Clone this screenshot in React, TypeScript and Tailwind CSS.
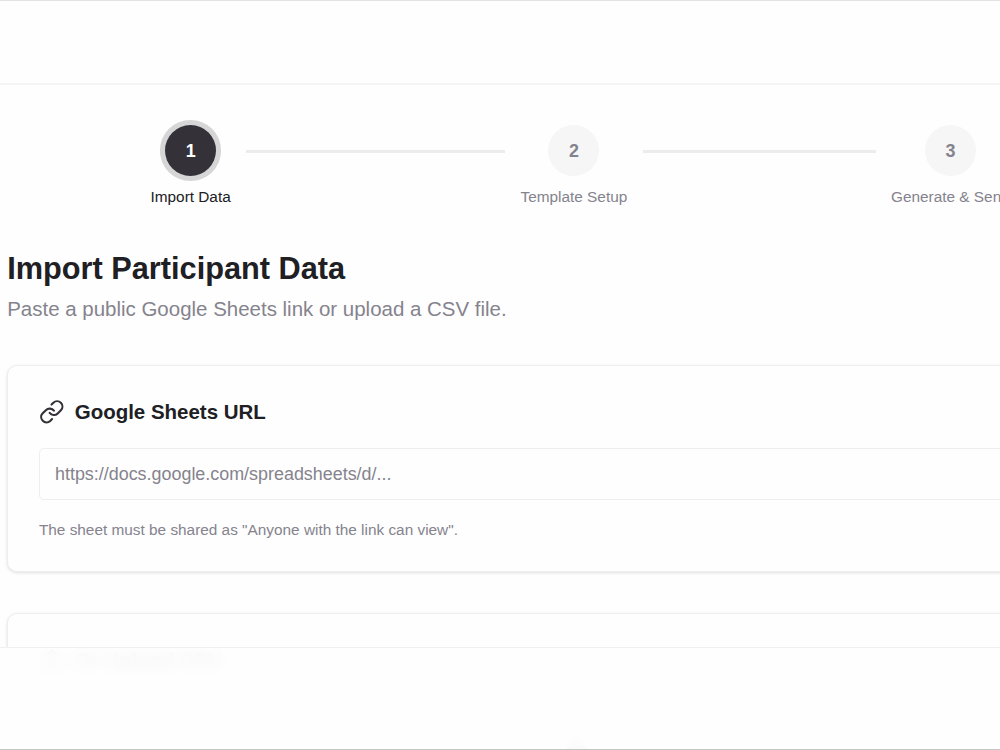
import { ReactNode } from 'react';
import { clsx } from 'clsx';
import { Link, Upload } from 'lucide-react';

interface StepProps {
  number: number;
  label: string;
  active?: boolean;
}

function Step({ number, label, active = false }: StepProps) {
  return (
    <div className="flex shrink-0 flex-col items-center">
      <div
        className={clsx(
          'flex size-[51.2px] items-center justify-center rounded-full pt-px text-[17.92px] font-bold',
          active
            ? 'bg-[#343238] text-white ring-[5.12px] ring-[#d6d6d7]'
            : 'bg-[#f6f6f6] text-[#85838d]'
        )}
      >
        {number}
      </div>
      <span
        className={clsx(
          'mt-[11px] text-[15.36px] leading-[20.48px] whitespace-nowrap',
          active ? 'text-[#202024]' : 'text-[#85838d]'
        )}
      >
        {label}
      </span>
    </div>
  );
}

interface CardProps {
  icon: ReactNode;
  title: string;
  children: ReactNode;
}

function Card({ icon, title, children }: CardProps) {
  return (
    <section className="w-[1136px] shrink-0 rounded-[10px] border border-[#eeeeee] bg-[#fefefe] p-[30.72px] shadow-[0_1px_3px_rgba(0,0,0,0.12)]">
      <div className="flex items-center gap-[10.24px]">
        {icon}
        <h2 className="text-[20.48px] leading-[30px] font-bold text-[#202024]">{title}</h2>
      </div>
      {children}
    </section>
  );
}

export default function App() {
  return (
    <div className="relative h-[750px] w-full overflow-hidden bg-[#fefefe] font-['Liberation_Sans',Arial,sans-serif]">
      <header className="h-[85px] border-t border-b-2 border-t-[#e3e3e3] border-b-[#f5f5f5]" />

      <main className="pl-[7.2px]">
        <div className="flex items-start pt-[40.3px] pl-[143.3px]">
          <Step number={1} label="Import Data" active />
          <div className="mx-[15.4px] mt-[24.7px] h-[2.56px] w-[259px] shrink-0 bg-[#ececec]" />
          <Step number={2} label="Template Setup" />
          <div className="mx-[15.4px] mt-[24.7px] h-[2.56px] w-[233px] shrink-0 bg-[#ececec]" />
          <Step number={3} label="Generate & Send" />
        </div>

        <div className="pt-[40px]">
          <h1 className="text-[30.72px] leading-[41px] font-bold text-[#202024]">
            Import Participant Data
          </h1>
          <p className="mt-[4px] text-[20.48px] leading-[31px] text-[#85838d]">
            Paste a public Google Sheets link or upload a CSV file.
          </p>
        </div>

        <div className="mt-[41px] flex flex-col gap-[41px]">
          <Card
            icon={<Link className="size-[25.6px] text-[#343238]" strokeWidth={2} />}
            title="Google Sheets URL"
          >
            <input
              type="text"
              placeholder="https://docs.google.com/spreadsheets/d/..."
              className="mt-[21.3px] block h-[52px] w-full rounded-[5px] border border-[#eeeeee] bg-[#fefefe] px-[15.1px] pt-px text-[17.92px] outline-none placeholder:text-[#85838d]"
            />
            <p className="mt-[20px] text-[15.36px] leading-[20.48px] text-[#85838d]">
              The sheet must be shared as "Anyone with the link can view".
            </p>
          </Card>

          <Card
            icon={<Upload className="size-[25.6px] text-[#343238]" />}
            title="Or Upload CSV"
          >
            <div className="mt-[20px] flex h-[200px] pt-[40px] pl-[512px]">
              <Upload className="size-[51.2px] text-[#85838d]" />
            </div>
          </Card>
        </div>
      </main>

      <footer className="absolute inset-x-0 bottom-0 h-[103px] border-t border-b border-t-[#f0f0f0] border-b-[#c6c6c6] bg-[#fefefe]/95 backdrop-blur-sm" />
    </div>
  );
}
